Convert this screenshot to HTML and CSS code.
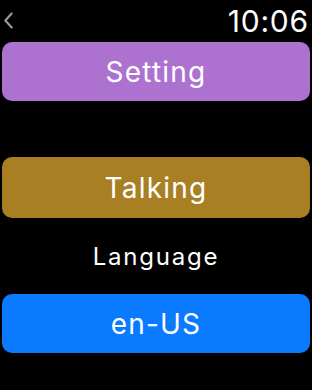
FILE: index.html
```html
<!DOCTYPE html>
<html lang="en">
	<head>
		<meta charset="utf-8" />
		<link rel="stylesheet" href="styles.css">
	</head>
	<body>
		<div class="screen flex column">
			<div class="status flex row">
				<svg class="back" viewBox="0 0 10 16">
					<path d="M8 1.5L2 8l6 6.5" />
				</svg>
				<span class="time">10:06</span>
			</div>
			<button type="button" class="btn purple spaced">Setting</button>
			<button type="button" class="btn gold">Talking</button>
			<div class="label center">Language</div>
			<button type="button" class="btn blue">en-US</button>
		</div>
	</body>
</html>
```

FILE: styles.css
```css
html, body {
	margin: 0;
	background-color: #000;
	color: #fff;
	font-family: Inter, "Noto Sans", sans-serif;
}

.flex {
	display: flex;
}

.flex.row {
	flex-direction: row;
}

.flex.column {
	flex-direction: column;
}

.center {
	text-align: center;
}

.screen {
	width: 312px;
	height: 390px;
	padding: 0 2px;
	box-sizing: border-box;
}

.status {
	height: 42px;
	align-items: center;
	justify-content: space-between;
}

.back {
	width: 11px;
	height: 17px;
	margin: 0 0 2px 1px;
	fill: none;
	stroke: #9a9a9f;
	stroke-width: 2;
	stroke-linecap: round;
	stroke-linejoin: round;
}

.time {
	font-size: 30px;
	line-height: 42px;
	font-weight: 400;
	letter-spacing: 0.8px;
	margin-right: 1px;
}

.btn {
	height: 59px;
	border: none;
	border-radius: 10px;
	color: #fff;
	font-family: inherit;
	font-size: 28px;
	letter-spacing: 1.2px;
	padding: 0;
}

.spaced {
	margin-bottom: 56px;
}

.purple {
	background-color: #ad72cf;
}

.gold {
	background-color: #a97f24;
	height: 61px;
}

.blue {
	background-color: #0a7aff;
}

.label {
	height: 76px;
	line-height: 78px;
	font-size: 24px;
	letter-spacing: 1.8px;
}
```
